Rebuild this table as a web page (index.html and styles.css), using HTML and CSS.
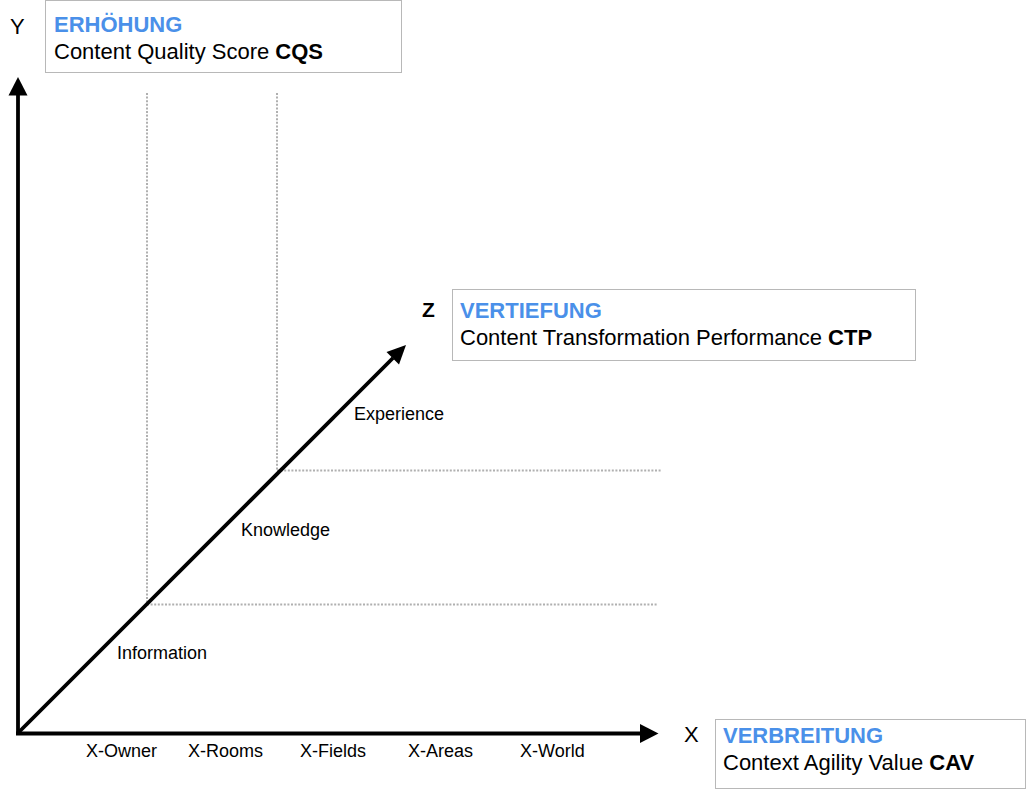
FILE: index.html
```html
<!DOCTYPE html>
<html lang="de">
<head>
<meta charset="utf-8">
<title>Content Dimensions</title>
<link rel="stylesheet" href="styles.css">
</head>
<body>
<div class="canvas">
  <svg class="lines" width="1028" height="792" viewBox="0 0 1028 792" xmlns="http://www.w3.org/2000/svg">
    <g class="dots">
      <line x1="147" y1="93" x2="147" y2="605"/>
      <line x1="277" y1="93" x2="277" y2="470"/>
      <line x1="147" y1="604.5" x2="658" y2="604.5"/>
      <line x1="277" y1="470.5" x2="662" y2="470.5"/>
    </g>
    <g class="axes">
      <line x1="18" y1="735" x2="18" y2="92"/>
      <line x1="16" y1="733.5" x2="642" y2="733.5"/>
      <line x1="18" y1="733" x2="393" y2="358"/>
    </g>
    <g class="heads">
      <polygon points="18,77 8.5,95.5 27.5,95.5"/>
      <polygon points="658.5,733.5 640,724 640,743"/>
      <polygon points="406,345 399,364.5 386.5,352"/>
    </g>
  </svg>

  <div class="axis-letter letter-y">Y</div>
  <div class="axis-letter letter-z">Z</div>
  <div class="axis-letter letter-x">X</div>

  <div class="box box-y">
    <div class="box-title">ERHÖHUNG</div>
    <div class="box-text">Content Quality Score <b>CQS</b></div>
  </div>
  <div class="box box-z">
    <div class="box-title">VERTIEFUNG</div>
    <div class="box-text">Content Transformation Performance <b>CTP</b></div>
  </div>
  <div class="box box-x">
    <div class="box-title">VERBREITUNG</div>
    <div class="box-text">Context Agility Value <b>CAV</b></div>
  </div>

  <div class="label lbl-info">Information</div>
  <div class="label lbl-know">Knowledge</div>
  <div class="label lbl-exp">Experience</div>

  <div class="label tick tick-owner">X-Owner</div>
  <div class="label tick tick-rooms">X-Rooms</div>
  <div class="label tick tick-fields">X-Fields</div>
  <div class="label tick tick-areas">X-Areas</div>
  <div class="label tick tick-world">X-World</div>
</div>
</body>
</html>
```

FILE: styles.css
```css
html, body {
  margin: 0;
  padding: 0;
  background: #ffffff;
}

body {
  font-family: "Liberation Sans", Arial, Helvetica, sans-serif;
  color: #000000;
}

.canvas {
  position: relative;
  width: 1028px;
  height: 792px;
  overflow: hidden;
}

.lines {
  position: absolute;
  left: 0;
  top: 0;
}

.dots line {
  stroke: #b0b0b0;
  stroke-width: 2;
  stroke-dasharray: 2 1.6;
  fill: none;
}

.axes line {
  stroke: #000000;
  stroke-width: 3.8;
  fill: none;
}

.heads polygon {
  fill: #000000;
}

.axis-letter {
  position: absolute;
  font-size: 22px;
  line-height: 26px;
  white-space: nowrap;
}

.letter-y { left: 10px; top: 14px; }
.letter-z { left: 422px; top: 297px; font-weight: bold; font-size: 21px; }
.letter-x { left: 684px; top: 722px; }

.box {
  position: absolute;
  box-sizing: border-box;
  display: flex;
  flex-direction: column;
  border: 1px solid #b8b8b8;
  background: #ffffff;
  font-size: 22px;
  line-height: 27px;
  white-space: nowrap;
}

.box-title {
  color: #4a90e9;
  font-weight: bold;
}

.box-text b {
  font-weight: bold;
}

.box-y {
  left: 45px;
  top: 0;
  width: 357px;
  height: 73px;
  padding: 10px 0 0 8px;
}

.box-z {
  left: 452px;
  top: 289px;
  width: 464px;
  height: 72px;
  padding: 7px 0 0 7px;
}

.box-x {
  left: 715px;
  top: 719px;
  width: 311px;
  height: 70px;
  padding: 2px 0 0 7px;
}

.label {
  position: absolute;
  font-size: 18px;
  line-height: 20px;
  white-space: nowrap;
}

.lbl-info { left: 117px; top: 643px; }
.lbl-know { left: 241px; top: 520px; }
.lbl-exp { left: 354px; top: 404px; }

.tick { top: 741px; }
.tick-owner { left: 86px; }
.tick-rooms { left: 188px; }
.tick-fields { left: 300px; }
.tick-areas { left: 408px; }
.tick-world { left: 520px; }
```
